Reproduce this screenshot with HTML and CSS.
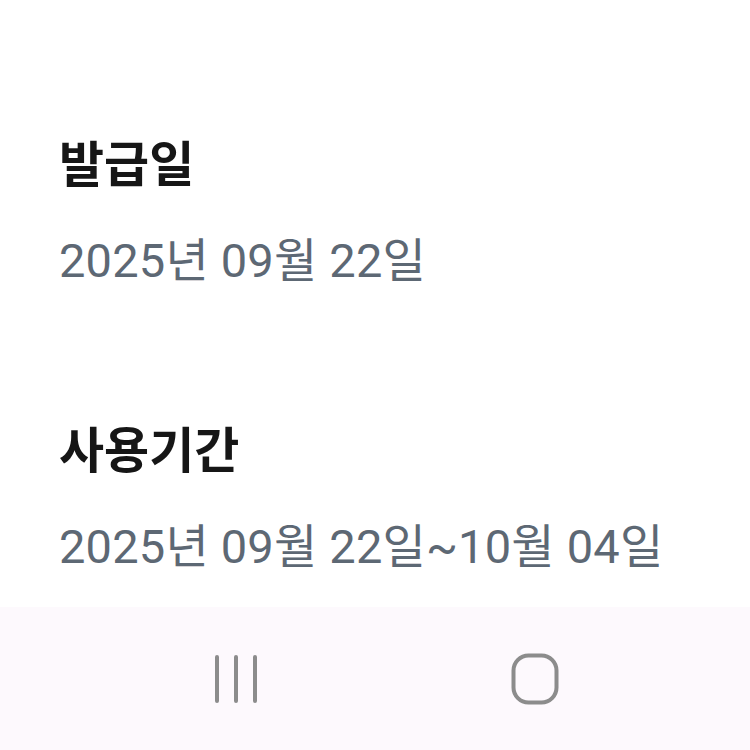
FILE: index.html
```html
<!DOCTYPE html>
<html lang="ko">

<head>
  <meta charset="UTF-8">
  <meta name="viewport" content="width=device-width, initial-scale=1.0">
  <title>쿠폰 정보</title>
  <link rel="stylesheet" href="styles.css">
</head>

<body>
  <main class="info">
    <section class="info-item">
      <h2 class="info-label">발급일</h2>
      <p class="info-value">2025년 09월 22일</p>
    </section>
    <section class="info-item">
      <h2 class="info-label">사용기간</h2>
      <p class="info-value">2025년 09월 22일~10월 04일</p>
    </section>
  </main>

  <!-- System navigation bar -->
  <nav class="nav-bar">
    <span class="nav-recents">
      <svg width="46" height="50" viewBox="0 0 46 50">
        <path d="M3 3 V47 M22 3 V47 M41 3 V47" stroke="#8c8c8c" stroke-width="4" stroke-linecap="round" fill="none" />
      </svg>
    </span>
    <span class="nav-home">
      <svg width="50" height="54" viewBox="0 0 50 54">
        <rect x="3.5" y="3.5" width="43" height="47" rx="15" stroke="#8c8c8c" stroke-width="4" fill="none" />
      </svg>
    </span>
  </nav>
</body>

</html>
```

FILE: styles.css
```css
html,
body {
  margin: 0;
  height: 100%;
}

body {
  font-family: Roboto, 'Noto Sans CJK KR', sans-serif;
  background-color: #fff;
  display: flex;
  flex-direction: column;
  overflow: hidden;
}

.info {
  flex: 1;
  padding: 131px 0 0 59px;
  display: flex;
  flex-direction: column;
  gap: 126px;
}

.info-label {
  margin: 0 0 40px;
  font-family: 'Noto Sans CJK KR', sans-serif;
  font-size: 49px;
  font-weight: 700;
  line-height: 60px;
  color: #161616;
}

.info-value {
  margin: 0;
  font-size: 47px;
  line-height: 60px;
  letter-spacing: 0.2px;
  color: #5d6874;
}

.nav-bar {
  height: 143px;
  background-color: #fdf9fd;
  display: flex;
  align-items: center;
  padding-left: 214px;
  gap: 250px;
}

.nav-recents svg,
.nav-home svg {
  display: block;
}
```
